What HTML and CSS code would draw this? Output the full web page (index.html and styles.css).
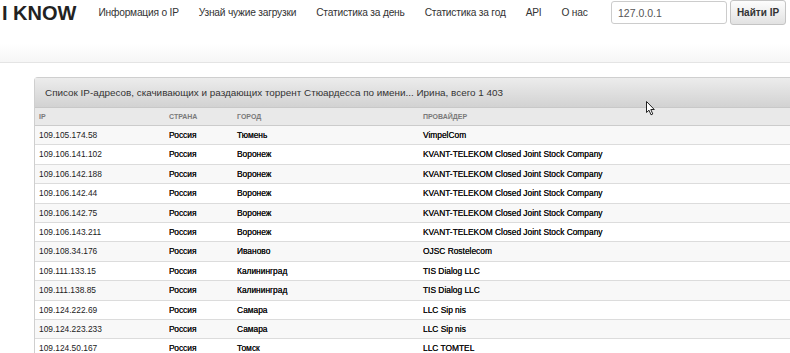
FILE: index.html
```html
<!DOCTYPE html>
<html lang="ru">
<head>
  <meta charset="UTF-8">
  <title>I KNOW</title>
  <link rel="stylesheet" href="styles.css">
</head>
<body>
  <div class="topbar">
    <a class="brand" href="#">I KNOW</a>
    <ul class="nav">
      <li><a href="#">Информация о IP</a></li>
      <li><a href="#">Узнай чужие загрузки</a></li>
      <li><a href="#">Статистика за день</a></li>
      <li><a href="#">Статистика за год</a></li>
      <li><a href="#">API</a></li>
      <li><a href="#">О нас</a></li>
    </ul>
    <form class="search">
      <input type="text" value="127.0.0.1">
      <button type="submit" class="btn">Найти IP</button>
    </form>
  </div>

  <div class="panel">
    <div class="panel-heading">Список IP-адресов, скачивающих и раздающих торрент Стюардесса по имени... Ирина, всего 1 403</div>
    <table class="table">
      <thead>
        <tr>
          <th class="col-ip">IP</th>
          <th class="col-country">Страна</th>
          <th class="col-city">Город</th>
          <th>Провайдер</th>
        </tr>
      </thead>
      <tbody>
        <tr><td>109.105.174.58</td><td class="b">Россия</td><td class="b">Тюмень</td><td class="b">VimpelCom</td></tr>
        <tr><td>109.106.141.102</td><td class="b">Россия</td><td class="b">Воронеж</td><td class="b">KVANT-TELEKOM Closed Joint Stock Company</td></tr>
        <tr><td>109.106.142.188</td><td class="b">Россия</td><td class="b">Воронеж</td><td class="b">KVANT-TELEKOM Closed Joint Stock Company</td></tr>
        <tr><td>109.106.142.44</td><td class="b">Россия</td><td class="b">Воронеж</td><td class="b">KVANT-TELEKOM Closed Joint Stock Company</td></tr>
        <tr><td>109.106.142.75</td><td class="b">Россия</td><td class="b">Воронеж</td><td class="b">KVANT-TELEKOM Closed Joint Stock Company</td></tr>
        <tr><td>109.106.143.211</td><td class="b">Россия</td><td class="b">Воронеж</td><td class="b">KVANT-TELEKOM Closed Joint Stock Company</td></tr>
        <tr><td>109.108.34.176</td><td class="b">Россия</td><td class="b">Иваново</td><td class="b">OJSC Rostelecom</td></tr>
        <tr><td>109.111.133.15</td><td class="b">Россия</td><td class="b">Калининград</td><td class="b">TIS Dialog LLC</td></tr>
        <tr><td>109.111.138.85</td><td class="b">Россия</td><td class="b">Калининград</td><td class="b">TIS Dialog LLC</td></tr>
        <tr><td>109.124.222.69</td><td class="b">Россия</td><td class="b">Самара</td><td class="b">LLC Sip nis</td></tr>
        <tr><td>109.124.223.233</td><td class="b">Россия</td><td class="b">Самара</td><td class="b">LLC Sip nis</td></tr>
        <tr><td>109.124.50.167</td><td class="b">Россия</td><td class="b">Томск</td><td class="b">LLC TOMTEL</td></tr>
      </tbody>
    </table>
  </div>

  <svg class="cursor" width="10" height="15" viewBox="0 0 10 15">
    <path d="M0.5 0.5 L0.5 11.5 L3 9.2 L5 13.8 L6.8 13 L4.8 8.5 L8.3 8.5 Z" fill="#fff" stroke="#222" stroke-width="1"/>
  </svg>
</body>
</html>
```

FILE: styles.css
```css
html, body {
  overflow: hidden;
}
body {
  margin: 0;
  font-family: "Liberation Sans", Arial, sans-serif;
  color: #333;
  background: #fff;
  position: relative;
  height: 353px;
}
a {
  color: #333;
  text-decoration: none;
}
.topbar {
  display: flex;
  align-items: flex-start;
  height: 62px;
  white-space: nowrap;
  background: linear-gradient(to bottom, #fff 0, #fff 44px, #f6f6f6 62px);
  border-bottom: 1px solid #e4e4e4;
}
.brand {
  flex-shrink: 0;
  font-size: 20px;
  line-height: 22px;
  font-weight: bold;
  color: #222;
  margin: 2px 0 0 2px;
}
.nav {
  display: flex;
  flex-shrink: 0;
  gap: 20px;
  list-style: none;
  margin: 0 0 0 22px;
  padding: 0;
}
.nav li a {
  display: block;
  font-size: 10.2px;
  letter-spacing: -0.2px;
  line-height: 12px;
  padding-top: 7px;
}
.search {
  display: flex;
  flex-shrink: 0;
  margin-left: auto;
  margin-right: 4px;
  padding-top: 1px;
}
.search input {
  width: 102px;
  height: 21px;
  padding: 0 6px;
  border: 1px solid #ccc;
  border-radius: 3px;
  font-family: inherit;
  font-size: 10.5px;
  color: #555;
  box-sizing: content-box;
}
.btn {
  margin-left: 3px;
  margin-top: -1px;
  height: 25px;
  width: 56px;
  border: 1px solid #c4c4c4;
  border-radius: 3px;
  background: linear-gradient(to bottom, #fdfdfd, #e2e2e2);
  font-family: inherit;
  font-size: 10px;
  font-weight: bold;
  color: #333;
  padding: 0;
}
.panel {
  margin: 14px 0 0 34px;
  width: 760px;
  border: 1px solid #cfcfcf;
  border-right: none;
  border-radius: 4px 0 0 0;
}
.panel-heading {
  height: 29px;
  line-height: 29px;
  padding-left: 10px;
  font-size: 9.9px;
  color: #333;
  background: linear-gradient(to bottom, #ececec, #d2d2d2);
  border-bottom: 1px solid #c8c8c8;
}
.table {
  width: 100%;
  border-collapse: collapse;
  font-size: 8.4px;
  color: #222;
}
.table th {
  text-align: left;
  text-transform: uppercase;
  font-size: 7px;
  font-weight: bold;
  color: #7a7a7a;
  background: #e9e9e9;
  height: 17px;
  padding: 0 4px;
  border-bottom: 1px solid #ccc;
}
.col-ip {
  width: 122px;
}
.col-country {
  width: 60px;
}
.col-city {
  width: 178px;
}
.table td {
  padding: 4px 4px;
  line-height: 10.4px;
  border-top: 1px solid #dcdcdc;
  white-space: nowrap;
}
.table tbody tr:nth-child(odd) td {
  background: #f8f8f8;
}
.b {
  color: #111;
  text-shadow: 0 0 0.3px #111;
}
.cursor {
  position: absolute;
  left: 646px;
  top: 101px;
}
```
